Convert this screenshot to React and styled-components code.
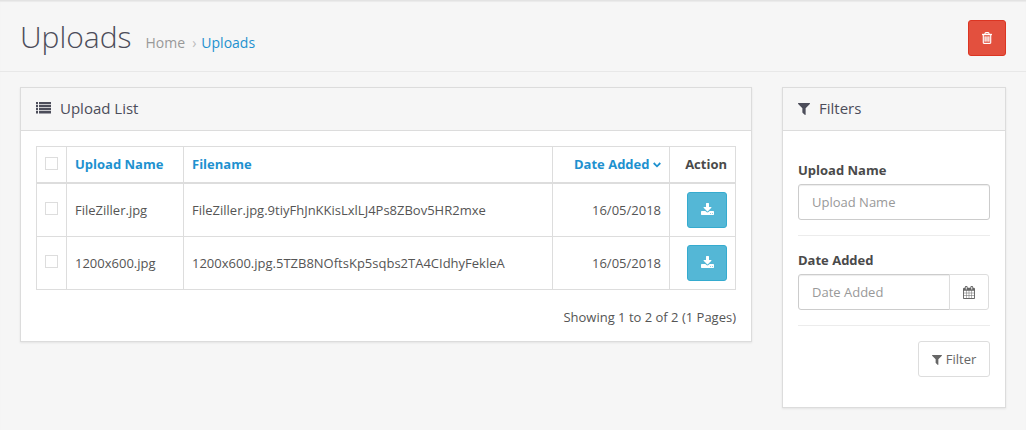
import React from 'react';
import styled, { createGlobalStyle } from 'styled-components';

const Global = createGlobalStyle`
  *, *::before, *::after { box-sizing: border-box; }
  body {
    margin: 0;
    background: #f6f6f6;
    color: #555;
    font: 13px/20px 'Open Sans', 'Liberation Sans', sans-serif;
  }
`;

const Page = styled.div`
  min-height: 430px;
  border-top: 1px solid #e3e3e3;
  box-shadow: inset 0 1px 1px rgba(0, 0, 0, 0.05);
`;

const Header = styled.header`
  display: flex;
  justify-content: space-between;
  align-items: flex-start;
  height: 71px;
  padding: 19px 20px 0;
  border-bottom: 1px solid #e8e8e8;
`;

const TitleGroup = styled.div`
  display: flex;
  align-items: baseline;
  gap: 14px;
`;

const Title = styled.h1`
  margin: 0;
  font-size: 30px;
  font-weight: 300;
  line-height: 34px;
  color: #4c4d5a;
`;

const Crumbs = styled.nav`
  display: flex;
  align-items: baseline;
  font-size: 14px;
  color: #999;
`;

const Separator = styled.span`
  margin: 0 5px 0 7px;
  color: #bbb;
`;

const Crumb = styled.a`
  color: ${(p) => (p.$current ? '#1e91cf' : '#999')};
`;

const Button = styled.button`
  display: inline-flex;
  align-items: center;
  justify-content: center;
  gap: 4px;
  width: ${(p) => p.$width}px;
  height: 36px;
  padding: 0;
  font: inherit;
  color: ${(p) => p.$tone.text};
  background: ${(p) => p.$tone.fill};
  border: 1px solid ${(p) => p.$tone.border};
  border-radius: 3px;
`;

const tones = {
  danger: { text: '#fff', fill: '#e3503e', border: '#dc3522' },
  info: { text: '#fff', fill: '#54b7d6', border: '#35abcf' },
  plain: { text: '#666', fill: '#fff', border: '#ddd' },
};

const Content = styled.main`
  display: flex;
  align-items: flex-start;
  gap: 30px;
  padding: 15px 20px 0;
`;

const Panel = styled.section`
  width: ${(p) => p.$width}px;
  height: ${(p) => p.$height}px;
  background: #fff;
  border: 1px solid #dcdcdc;
  box-shadow: 0 1px 2px rgba(0, 0, 0, 0.08);
`;

const PanelHeading = styled.h2`
  display: flex;
  align-items: center;
  gap: 9px;
  height: 43px;
  margin: 0;
  padding: 0 15px 2px;
  font-size: 15px;
  font-weight: 400;
  color: #4c4d5a;
  background: #f6f6f6;
  border-bottom: 1px solid #dcdcdc;
`;

const PanelBody = styled.div`
  padding: 15px;
`;

const Table = styled.table`
  width: 700px;
  table-layout: fixed;
  border-collapse: separate;
  border-spacing: 0;
  border: 1px solid #ddd;
  border-width: 1px 0 0 1px;
`;

const Row = styled.tr`
  height: ${(p) => (p.$head ? 37 : 53)}px;
`;

const Cell = styled.td`
  padding: 0 8px ${(p) => (p.$head ? 2 : 0)}px;
  text-align: ${(p) => p.$align || 'left'};
  vertical-align: middle;
  font-weight: ${(p) => (p.$head ? 700 : 400)};
  color: ${(p) => (p.$link ? '#1e91cf' : p.$head ? '#4a4a4a' : '#555')};
  border: 0 solid #ddd;
  border-width: 0 1px ${(p) => (p.$head ? 2 : 1)}px 0;
  white-space: nowrap;
`;

const Checkbox = styled.input.attrs({ type: 'checkbox' })`
  appearance: none;
  display: block;
  width: 13px;
  height: 13px;
  margin: 0 0 ${(p) => p.$lift}px;
  background: #fff;
  border: 1px solid #ddd;
`;

const Results = styled.p`
  margin: 17px 0 0;
  text-align: right;
`;

const Field = styled.div`
  padding: 14px 0 15px;
  border-bottom: 1px solid #ececec;
`;

const Label = styled.label`
  display: block;
  margin-bottom: 4px;
  font-weight: 700;
  color: #4a4a4a;
`;

const InputGroup = styled.div`
  display: flex;
`;

const Input = styled.input`
  width: ${(p) => (p.$joined ? 152 : 192)}px;
  height: 36px;
  padding: 0 13px;
  font: inherit;
  color: #555;
  background: #fff;
  border: 1px solid #ccc;
  border-radius: ${(p) => (p.$joined ? '3px 0 0 3px' : '3px')};
  box-shadow: inset 0 1px 1px rgba(0, 0, 0, 0.075);
  &::placeholder { color: #999; opacity: 1; }
`;

const Addon = styled(Button)`
  margin-left: -1px;
  border-radius: 0 3px 3px 0;
`;

const Actions = styled.div`
  display: flex;
  justify-content: flex-end;
  padding-top: 15px;
`;

const Glyph = styled.svg`
  display: block;
  flex: none;
  fill: currentColor;
  stroke: currentColor;
  stroke-width: ${(p) => p.$weight || 0};
  width: ${(p) => p.$w}px;
  height: ${(p) => p.$h}px;
  margin: ${(p) => p.$drop || 0}px 0 ${(p) => p.$lift || 0}px;
`;

const shapes = {
  list: {
    box: '0 0 15 12',
    d: 'M0 0h2v2.3h-2zM3 0h12v2.3h-12zM0 3h2v2.3h-2zM3 3h12v2.3h-12zM0 6h2v2.3h-2zM3 6h12v2.3h-12zM0 9h2v2.6h-2zM3 9h12v2.6h-12z',
  },
  filter: {
    box: '192 256 1408 1408',
    d: 'M1595 295q17 41-14 70l-493 493v742q0 42-39 59-13 5-25 5-27 0-45-19l-256-256q-19-19-19-45v-486l-493-493q-31-29-14-70 17-39 59-39h1280q42 0 59 39z',
  },
  trash: {
    box: '192 128 1408 1536',
    d: 'M704 736v576q0 14-9 23t-23 9h-64q-14 0-23-9t-9-23v-576q0-14 9-23t23-9h64q14 0 23 9t9 23zm256 0v576q0 14-9 23t-23 9h-64q-14 0-23-9t-9-23v-576q0-14 9-23t23-9h64q14 0 23 9t9 23zm256 0v576q0 14-9 23t-23 9h-64q-14 0-23-9t-9-23v-576q0-14 9-23t23-9h64q14 0 23 9t9 23zm128 724v-948h-896v948q0 22 7 40.5t14.5 27 10.5 8.5h832q3 0 10.5-8.5t14.5-27 7-40.5zm-672-1076h448l-48-117q-7-9-17-11h-317q-10 2-17 11zm928 32v64q0 14-9 23t-23 9h-96v948q0 83-47 143.5t-113 60.5h-832q-66 0-113-58.5t-47-141.5v-952h-96q-14 0-23-9t-9-23v-64q0-14 9-23t23-9h309l70-167q15-37 54-63t79-26h320q40 0 79 26t54 63l70 167h309q14 0 23 9t9 23z',
  },
  download: {
    box: '64 0 1664 1536',
    d: 'M1344 1344q0-26-19-45t-45-19-45 19-19 45 19 45 45 19 45-19 19-45zm256 0q0-26-19-45t-45-19-45 19-19 45 19 45 45 19 45-19 19-45zm128-224v320q0 40-28 68t-68 28h-1472q-40 0-68-28t-28-68v-320q0-40 28-68t68-28h465l135 136q58 56 136 56t136-56l136-136h464q40 0 68 28t28 68zm-325-569q17 41-14 70l-448 448q-18 19-45 19t-45-19l-448-448q-31-29-14-70 17-39 59-39h256v-448q0-26 19-45t45-19h256q26 0 45 19t19 45v448h256q42 0 59 39z',
  },
  calendar: {
    box: '64 0 1664 1792',
    d: 'M192 1664h288v-288h-288v288zm352 0h320v-288h-320v288zm-352-352h288v-320h-288v320zm352 0h320v-320h-320v320zm-352-384h288v-288h-288v288zm736 736h320v-288h-320v288zm-384-736h320v-288h-320v288zm768 736h288v-288h-288v288zm-384-352h320v-320h-320v320zm-352-864v-288q0-13-9.5-22.5t-22.5-9.5h-64q-13 0-22.5 9.5t-9.5 22.5v288q0 13 9.5 22.5t22.5 9.5h64q13 0 22.5-9.5t9.5-22.5zm736 864h288v-320h-288v320zm-384-384h320v-288h-320v288zm384 0h288v-288h-288v288zm32-480v-288q0-13-9.5-22.5t-22.5-9.5h-64q-13 0-22.5 9.5t-9.5 22.5v288q0 13 9.5 22.5t22.5 9.5h64q13 0 22.5-9.5t9.5-22.5zm384-64v1280q0 52-38 90t-90 38h-1408q-52 0-90-38t-38-90v-1280q0-52 38-90t90-38h128v-96q0-66 47-113t113-47h64q66 0 113 47t47 113v96h384v-96q0-66 47-113t113-47h64q66 0 113 47t47 113v96h128q52 0 90 38t38 90z',
  },
};

function Icon({ name, w, h, drop, lift, weight }) {
  const shape = shapes[name];
  return (
    <Glyph
      viewBox={shape.box}
      preserveAspectRatio="none"
      $w={w}
      $h={h}
      $drop={drop}
      $lift={lift}
      $weight={weight}
      aria-hidden="true"
    >
      <path d={shape.d} />
    </Glyph>
  );
}

const SortArrow = styled.svg`
  display: inline-block;
  width: 8px;
  height: 6px;
  margin-left: 3.5px;
  vertical-align: 1px;
  fill: none;
  stroke: currentColor;
  stroke-width: 1.8;
`;

const uploads = [
  { name: 'FileZiller.jpg', file: 'FileZiller.jpg.9tiyFhJnKKisLxlLJ4Ps8ZBov5HR2mxe', date: '16/05/2018' },
  { name: '1200x600.jpg', file: '1200x600.jpg.5TZB8NOftsKp5sqbs2TA4CIdhyFekleA', date: '16/05/2018' },
];

export default function App() {
  return (
    <Page>
      <Global />
      <Header>
        <TitleGroup>
          <Title>Uploads</Title>
          <Crumbs>
            <Crumb>Home</Crumb>
            <Separator>›</Separator>
            <Crumb $current>Uploads</Crumb>
          </Crumbs>
        </TitleGroup>
        <Button $width={38} $tone={tones.danger} aria-label="Delete">
          <Icon name="trash" w={10} h={12} weight={50} />
        </Button>
      </Header>
      <Content>
        <Panel $width={732} $height={255}>
          <PanelHeading>
            <Icon name="list" w={15} h={12} />
            Upload List
          </PanelHeading>
          <PanelBody>
            <Table>
              <colgroup>
                <col width="30" />
                <col width="117" />
                <col width="369" />
                <col width="117" />
                <col width="66" />
              </colgroup>
              <thead>
                <Row $head>
                  <Cell as="th" $head><Checkbox $lift={0} /></Cell>
                  <Cell as="th" $head $link>Upload Name</Cell>
                  <Cell as="th" $head $link>Filename</Cell>
                  <Cell as="th" $head $link $align="right">
                    Date Added
                    <SortArrow viewBox="0 0 8 6"><path d="M0.7 1l3.3 3.3 3.3-3.3" /></SortArrow>
                  </Cell>
                  <Cell as="th" $head $align="right">Action</Cell>
                </Row>
              </thead>
              <tbody>
                {uploads.map((u) => (
                  <Row key={u.name}>
                    <Cell><Checkbox $lift={3} /></Cell>
                    <Cell>{u.name}</Cell>
                    <Cell>{u.file}</Cell>
                    <Cell $align="right">{u.date}</Cell>
                    <Cell $align="right">
                      <Button $width={40} $tone={tones.info} aria-label="Download">
                        <Icon name="download" w={13} h={12} lift={2} />
                      </Button>
                    </Cell>
                  </Row>
                ))}
              </tbody>
            </Table>
            <Results>Showing 1 to 2 of 2 (1 Pages)</Results>
          </PanelBody>
        </Panel>
        <Panel as="aside" $width={224} $height={321}>
          <PanelHeading>
            <Icon name="filter" w={12} h={12} drop={2} />
            Filters
          </PanelHeading>
          <PanelBody>
            <Field>
              <Label>Upload Name</Label>
              <Input placeholder="Upload Name" />
            </Field>
            <Field>
              <Label>Date Added</Label>
              <InputGroup>
                <Input $joined placeholder="Date Added" />
                <Addon $width={40} $tone={tones.plain} aria-label="Pick a date">
                  <Icon name="calendar" w={12} h={13} drop={1} />
                </Addon>
              </InputGroup>
            </Field>
            <Actions>
              <Button $width={72} $tone={tones.plain}>
                <Icon name="filter" w={10} h={10} drop={2} />
                Filter
              </Button>
            </Actions>
          </PanelBody>
        </Panel>
      </Content>
    </Page>
  );
}
